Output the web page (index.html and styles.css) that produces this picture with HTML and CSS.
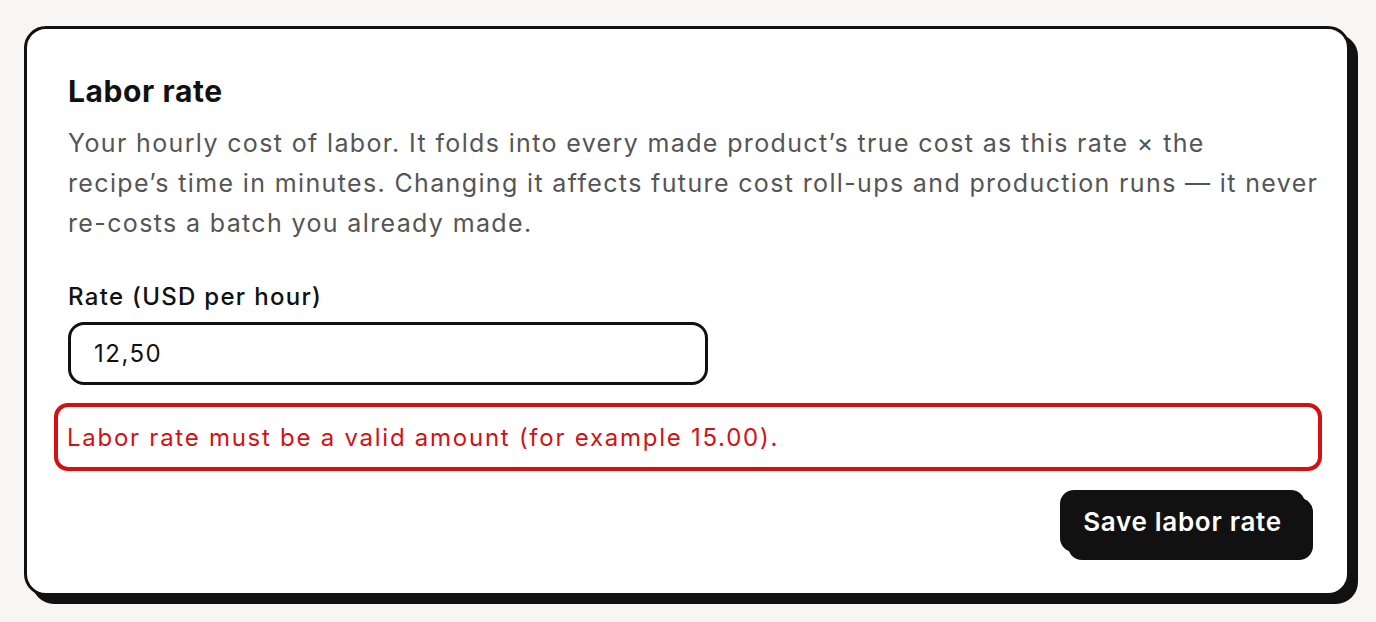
FILE: index.html
```html
<!DOCTYPE html>
<html lang="en">
<head>
  <meta charset="UTF-8">
  <meta name="viewport" content="width=device-width, initial-scale=1.0">
  <title>Labor rate</title>
  <link rel="stylesheet" href="styles.css">
</head>
<body>
  <section class="card">
    <h2 class="card-title">Labor rate</h2>
    <p class="card-help">Your hourly cost of labor. It folds into every made product’s true cost as this rate × the<br>
      recipe’s time in minutes. Changing it affects future cost roll-ups and production runs — it never re-costs a batch you already made.</p>

    <form class="rate-form" onsubmit="return false">
      <label class="field-label" for="rate">Rate (USD per hour)</label>
      <input class="field-input" id="rate" type="text" value="12,50">
      <p class="field-error" role="alert">Labor rate must be a valid amount (for example 15.00).</p>
      <div class="form-actions">
        <button class="btn-primary" type="submit">Save labor rate</button>
      </div>
    </form>
  </section>
</body>
</html>
```

FILE: styles.css
```css
body {
  margin: 0;
  padding: 26px 26px 24px 24px;
  background-color: #f7f6f4;
  font-family: Inter, "Noto Sans", sans-serif;
  color: #111;
}
.card {
  background: #fff;
  border: 3px solid #111;
  border-radius: 22px;
  box-shadow: 8px 8px 0 #111;
  padding: 44px 40px 41px 41px;
}
.card-title {
  margin: 0;
  font-size: 30px;
  line-height: 36px;
  font-weight: 700;
  letter-spacing: 0.6px;
}
.card-help {
  margin: 14px -14px 0 0;
  font-size: 25px;
  line-height: 40px;
  color: #555;
  letter-spacing: 1.36px;
}
.rate-form {
  margin-top: 39px;
  display: flex;
  flex-direction: column;
}
.field-label {
  font-size: 24px;
  line-height: 30px;
  font-weight: 500;
  letter-spacing: 1.3px;
}
.field-input {
  margin-top: 10px;
  width: 640px;
  height: 63px;
  box-sizing: border-box;
  border: 3px solid #111;
  border-radius: 16px;
  padding: 0 23px;
  font: inherit;
  font-size: 24px;
  letter-spacing: 1.5px;
  color: #111;
  outline: none;
}
.field-error {
  margin: 18px -15px 0 -14px;
  padding: 16px 9px 14px;
  border: 4px solid #d41111;
  border-radius: 14px;
  font-size: 24px;
  line-height: 30px;
  color: #d41111;
  letter-spacing: 1.74px;
}
.form-actions {
  display: flex;
  justify-content: flex-end;
  margin-top: 19px;
  padding-right: 2px;
}
.btn-primary {
  width: 245px;
  height: 62px;
  padding: 0;
  background: #111;
  color: #fff;
  border: 2px solid #111;
  border-radius: 14px;
  box-shadow: 8px 8px 0 #111;
  font: inherit;
  font-size: 26px;
  font-weight: 600;
  letter-spacing: 0.7px;
  cursor: pointer;
}
```
